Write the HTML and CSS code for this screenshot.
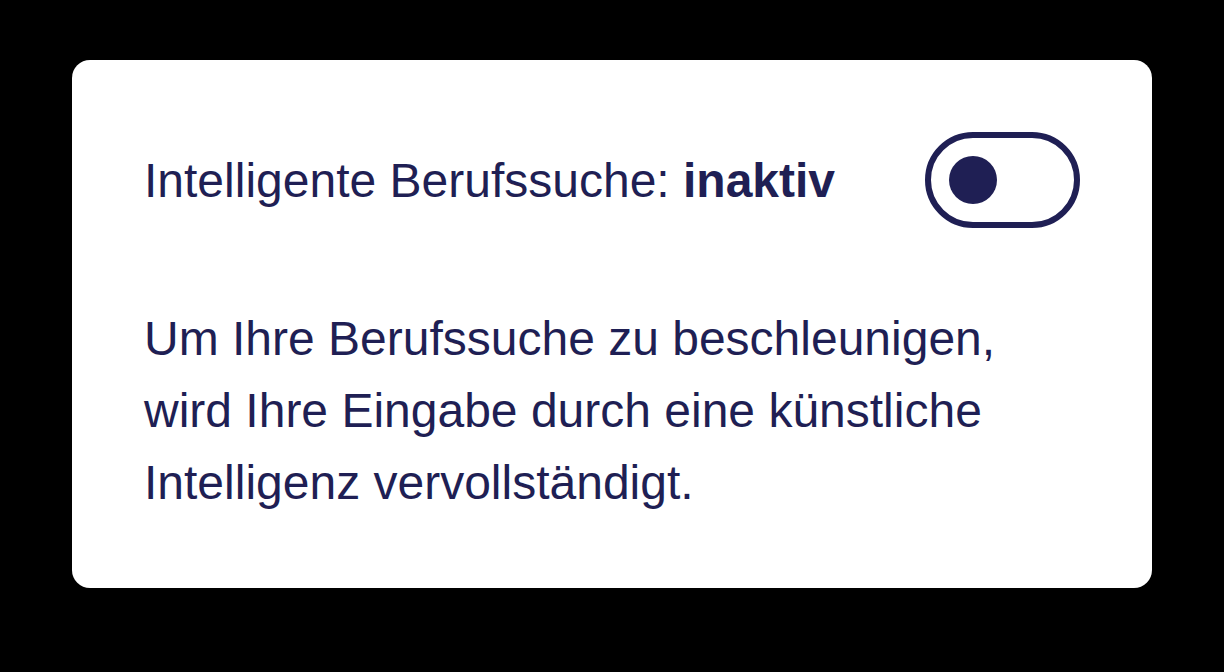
FILE: index.html
```html
<!DOCTYPE html>
<html lang="de">
<head>
<meta charset="utf-8">
<title>Intelligente Berufssuche</title>
<link rel="stylesheet" href="styles.css">
</head>
<body>
  <div class="card">
    <div class="row">
      <span class="label">Intelligente Berufssuche: <strong>inaktiv</strong></span>
      <button class="toggle" type="button" aria-pressed="false" aria-label="Intelligente Berufssuche umschalten">
        <span class="knob"></span>
      </button>
    </div>
    <p class="desc">Um Ihre Berufssuche zu beschleunigen, wird Ihre Eingabe durch eine künstliche Intelligenz vervollständigt.</p>
  </div>
</body>
</html>
```

FILE: styles.css
```css
html, body {
  margin: 0;
  padding: 0;
  background: #000;
}
body {
  width: 1224px;
  height: 672px;
  padding-top: 60px;
  box-sizing: border-box;
  font-family: "Liberation Sans", Arial, sans-serif;
  color: #1f1f54;
}
.card {
  width: 1080px;
  height: 528px;
  margin: 0 auto;
  box-sizing: border-box;
  background: #fff;
  border-radius: 18px;
  padding: 72px 72px 0 72px;
}
.row {
  display: flex;
  align-items: center;
  justify-content: space-between;
}
.label {
  font-size: 48px;
}
.label strong {
  font-weight: 700;
}
.toggle {
  width: 155px;
  height: 96px;
  box-sizing: border-box;
  border: 6px solid #1f1f54;
  border-radius: 48px;
  background: #fff;
  padding: 0 0 0 18px;
  margin: 0;
  display: flex;
  align-items: center;
}
.knob {
  width: 48px;
  height: 48px;
  border-radius: 50%;
  background: #1f1f54;
}
.desc {
  margin: 75px 0 0 0;
  font-size: 48px;
  line-height: 72px;
}
```
